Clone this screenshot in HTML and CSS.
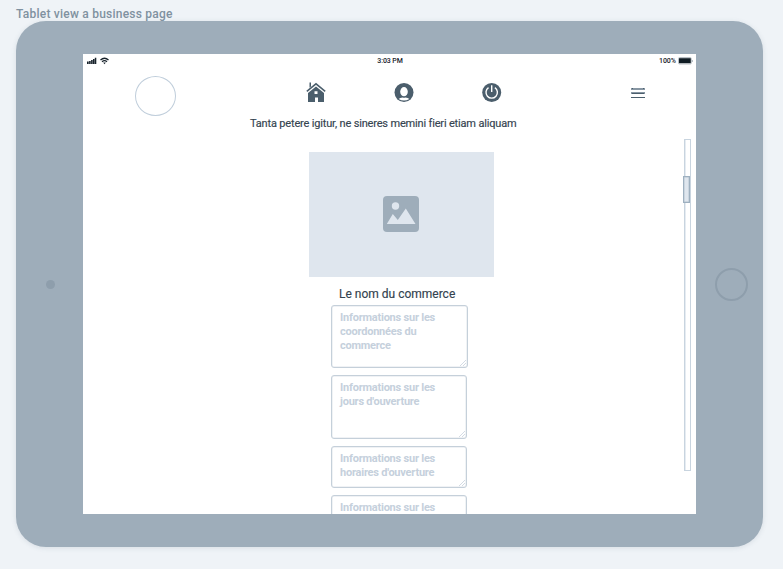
FILE: index.html
```html
<!DOCTYPE html>
<html lang="fr">
<head>
<meta charset="utf-8">
<title>Tablet view a business page</title>
<link rel="stylesheet" href="styles.css">
</head>
<body>
<h1 class="caption">Tablet view a business page</h1>
<main class="tablet">
  <div class="bezel"><span class="camera"></span></div>
  <section class="screen">
    <div class="status">
      <svg class="signal" width="24" height="8" viewBox="0 0 24 8" fill="#17222b">
        <path d="M0 4.500h1.700V7H0zM2.100 4h1.600v3H2.100zM4.100 3h1.600v4H4.100zM6 2h1.500v5H6zM7.800 .8h1.500V7H7.800z"/>
        <path d="M13.500 3Q17.500 -.6 21.500 3" fill="none" stroke="#17222b" stroke-width="1.300"/>
        <path d="M15 4.700Q17.500 2.600 20 4.700" fill="none" stroke="#17222b" stroke-width="1.200"/>
        <path d="M16.200 5.500h2.600L17.500 7.200z"/>
      </svg>
      <span class="clock">3:03 PM</span>
      <span class="battery">100%
        <svg width="15" height="8" viewBox="0 0 15 8"><rect x=".5" y=".5" width="12.800" height="6.500" rx="1" fill="#fff" stroke="#b9c0c6"/><rect x="1" y="1.200" width="11.800" height="5" fill="#101c24"/><path d="M14.300 3v2" stroke="#a9b2b9"/></svg>
      </span>
    </div>
    <nav class="nav">
      <span class="logo"></span>
      <svg class="home" width="20" height="20" viewBox="0 0 20 20" fill="#4b5e6c"><path d="M3.500 .5H5v4L3.500 5.800z"/><path d="M.8 9.400 10 1.800l9.200 7.600" fill="none" stroke="#4b5e6c" stroke-width="1.500"/><path fill-rule="evenodd" d="M10 4.500 18 11V20h-6v-4.500H9V20H2V11zM8.500 9.300v2.700h3V9.300z"/></svg>
      <svg class="user" width="20" height="20" viewBox="0 0 20 20"><circle cx="10" cy="9.500" r="9.500" fill="#4b5e6c"/><ellipse cx="10" cy="8.700" rx="3.800" ry="4.600" fill="#fff"/><path d="M4.600 16Q6 14.700 8.500 14.500Q10 15.200 11.500 14.500Q14 14.700 15.400 16Q10 19.200 4.600 16z" fill="#fff"/></svg>
      <svg class="power" width="20" height="20" viewBox="0 0 20 20"><circle cx="9.700" cy="9.500" r="9.500" fill="#4b5e6c"/><path d="M6.500 4.700a5.700 5.700 0 1 0 6.400 0M9.700 2.300v6.700" fill="none" stroke="#fff" stroke-width="1.400"/></svg>
      <svg class="menu" width="16" height="12" viewBox="0 0 16 12"><path d="M1 2h14M1 6h14" stroke="#8796a3" stroke-width="2"/><path d="M2 6.500h12M1 10.500h14M2 1.500h1M13 1.500h1" stroke="#4b5e6c"/></svg>
    </nav>
    <div class="content">
      <p class="tagline">Tanta petere igitur, ne sineres memini fieri etiam aliquam</p>
      <div class="photo">
        <svg width="36" height="36" viewBox="0 0 36 36"><rect width="36" height="36" rx="4" fill="#9eadba"/><circle cx="12.500" cy="10" r="3.700" fill="#dfe6ee"/><path d="M3.800 28 9.800 18l5 6L22.800 12.500l9.700 15.500z" fill="#dfe6ee"/></svg>
      </div>
      <h2 class="name">Le nom du commerce</h2>
      <div class="fields">
        <div class="field f1">Informations sur les<br>coordonnées du<br>commerce<i class="grip"></i></div>
        <div class="field f2">Informations sur les<br>jours d'ouverture<i class="grip"></i></div>
        <div class="field f3">Informations sur les<br>horaires d'ouverture<i class="grip"></i></div>
        <div class="field f4">Informations sur les</div>
      </div>
      <div class="track"><span class="thumb"></span></div>
    </div>
  </section>
  <div class="bezel"><span class="button"></span></div>
</main>
</body>
</html>
```
FILE: styles.css
```css
* { box-sizing: border-box; }
body {
  margin: 0;
  width: 783px;
  height: 569px;
  overflow: hidden;
  background: #eff3f7;
  font-family: Roboto, "Liberation Sans", sans-serif;
  color: #34434f;
}
.caption {
  margin: 0;
  height: 20.5px;
  padding: 6px 0 0 16px;
  font-size: 12px;
  line-height: 16px;
  font-weight: 500;
  letter-spacing: .23px;
  color: #7f91a0;
  white-space: nowrap;
}
.tablet {
  display: grid;
  grid-template-columns: 67px 613px 67px;
  width: 747px;
  height: 526.5px;
  margin-left: 16px;
  padding: 33.5px 0 33px;
  border-radius: 30px;
  background: #9eadba;
  box-shadow: 0 1px 5px rgba(80, 100, 120, .15);
}
.bezel { display: flex; align-items: center; justify-content: center; }
.camera { width: 9px; height: 9px; border-radius: 50%; background: #8e9eac; margin-left: 2px; }
.button { width: 33px; height: 33px; border: 2px solid #8e9eac; border-radius: 50%; margin-left: 4px; }
.screen { height: 460px; overflow: hidden; background: #fff; }
.status {
  display: grid;
  grid-template-columns: 1fr auto 1fr;
  align-items: center;
  height: 13px;
  padding: 0 3px 0 4px;
  font-size: 7px;
  line-height: 8px;
  font-weight: 500;
  color: #17222b;
}
.clock { letter-spacing: -.1px; }
.battery { display: flex; align-items: center; justify-content: flex-end; gap: 2px; }
.nav {
  display: grid;
  grid-template-columns: 52px 171px 88px 88px 148px 20px;
  height: 50px;
  padding-top: 9px;
}
.logo { grid-column: 2; width: 41px; height: 40px; border: 1px solid #c0cedb; border-radius: 50%; }
.home { margin-top: 6px; margin-left: -.5px; }
.user, .power { margin-top: 7px; margin-left: -.5px; }
.menu { margin-top: 11px; }
.content {
  display: grid;
  grid-template-columns: 226px 185px 189px 6px;
  grid-template-rows: 22px 13px 125px auto auto;
}
.tagline {
  grid-column: 1 / 4;
  grid-row: 1;
  margin: 0;
  padding-left: 167px;
  font-size: 11px;
  line-height: 14px;
  letter-spacing: -.17px;
  -webkit-text-stroke: .15px #34434f;
  white-space: nowrap;
}
.photo {
  grid-column: 2;
  grid-row: 3;
  display: flex;
  align-items: center;
  justify-content: center;
  padding: 0 1px 1px 0;
  background: #dfe6ee;
}
.name {
  grid-column: 2;
  grid-row: 4;
  margin: 0;
  padding: 10px 0 3px 30px;
  font-size: 12px;
  line-height: 15px;
  font-weight: 400;
  -webkit-text-stroke: .15px #34434f;
  white-space: nowrap;
}
.fields {
  grid-column: 2;
  grid-row: 5;
  display: flex;
  flex-direction: column;
  gap: 7px;
  height: 210px;
  padding-left: 22px;
}
.field {
  position: relative;
  flex: none;
  width: 136px;
  padding: 5px 0 0 8px;
  border: 1px solid #c5d0da;
  border-radius: 3px;
  box-shadow: inset 0 0 0 .5px #e1e6eb;
  font-size: 11px;
  line-height: 14px;
  letter-spacing: -.22px;
  font-weight: 700;
  color: #c5d0dc;
  white-space: nowrap;
}
.f1 { height: 63px; width: 137px; }
.f2 { height: 64px; }
.f3, .f4 { height: 42px; }
.grip {
  position: absolute;
  right: 1px;
  bottom: 1px;
  width: 6px;
  height: 6px;
  background: linear-gradient(135deg, transparent 46%, #d3dbe4 46%, #d3dbe4 56%, transparent 56%, transparent 70%, #d3dbe4 70%, #d3dbe4 82%, transparent 82%);
}
.track {
  grid-column: 4;
  grid-row: 1 / 6;
  height: 332px;
  margin: 22px 0 0 1px;
  width: 7px;
  border: 1px solid #c8d4df;
  box-shadow: inset 1px 0 #e6ecf2;
}
.thumb {
  display: block;
  width: 7px;
  height: 27px;
  margin: 36px 0 0 -2px;
  border: 1px solid #9eb0c0;
  box-shadow: inset 0 0 0 .5px #b5c3d0;
  background: #dfe6ee;
}
```
